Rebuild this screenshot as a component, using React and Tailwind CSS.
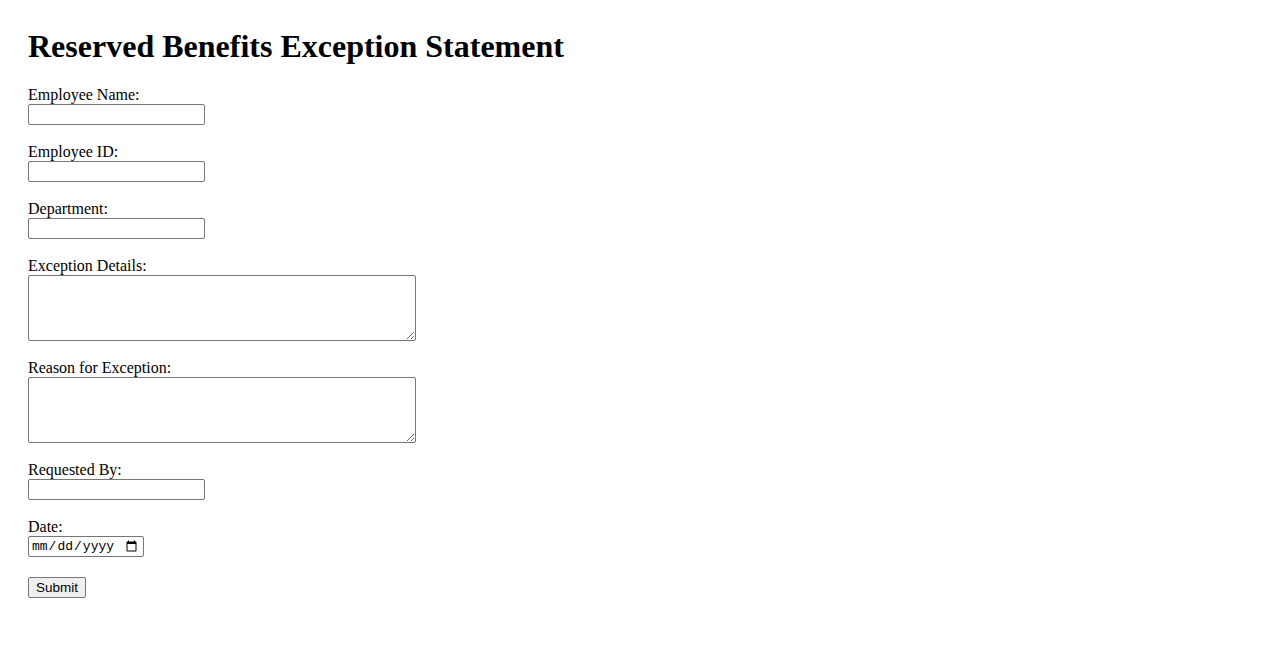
import React from "react";

const textFields = [
  { id: "employeeName", label: "Employee Name:" },
  { id: "employeeId", label: "Employee ID:" },
  { id: "department", label: "Department:" },
];

function TextField({ id, label }) {
  return (
    <div className="mb-[18px]">
      <label htmlFor={id} className="block h-[18px] leading-[18px]">{label}</label>
      <input
        id={id}
        type="text"
        className="block w-[177px] h-[21px] border border-[#767676] rounded-[2px] px-[2px] text-[13px] font-['Liberation_Sans',sans-serif] bg-white"
      />
    </div>
  );
}

function AreaField({ id, label }) {
  return (
    <div className="mb-[18px]">
      <label htmlFor={id} className="block h-[18px] leading-[18px]">{label}</label>
      <textarea
        id={id}
        className="block w-[388px] h-[66px] border border-[#767676] rounded-[2px] p-[2px] text-[13px] font-['Liberation_Mono',monospace] bg-white resize"
      />
    </div>
  );
}

export default function App() {
  return (
    <div className="min-h-screen bg-white text-black font-['Liberation_Serif',serif] text-[16px] pt-[28px] pl-[28px]">
      <h1 className="text-[32px] font-bold leading-[37px] h-[37px] mb-[21px]">Reserved Benefits Exception Statement</h1>

      <form onSubmit={(e) => e.preventDefault()}>
        {textFields.map((f) => (
          <TextField key={f.id} {...f} />
        ))}

        <AreaField id="exceptionDetails" label="Exception Details:" />
        <AreaField id="reason" label="Reason for Exception:" />

        <TextField id="requestedBy" label="Requested By:" />

        <div className="mb-[20px]">
          <label htmlFor="date" className="block h-[18px] leading-[18px]">Date:</label>
          <input
            id="date"
            type="date"
            className="block w-[116px] h-[21px] border border-[#767676] rounded-[2px] pl-[2px] pr-[3px] text-[13px] font-['Liberation_Mono',monospace] bg-white"
          />
        </div>

        <button
          type="submit"
          className="block h-[21px] px-[7px] border border-[#767676] rounded-[2px] bg-[#efefef] text-[13.5px] leading-[17px] font-['Liberation_Sans',sans-serif]"
        >
          Submit
        </button>
      </form>
    </div>
  );
}
